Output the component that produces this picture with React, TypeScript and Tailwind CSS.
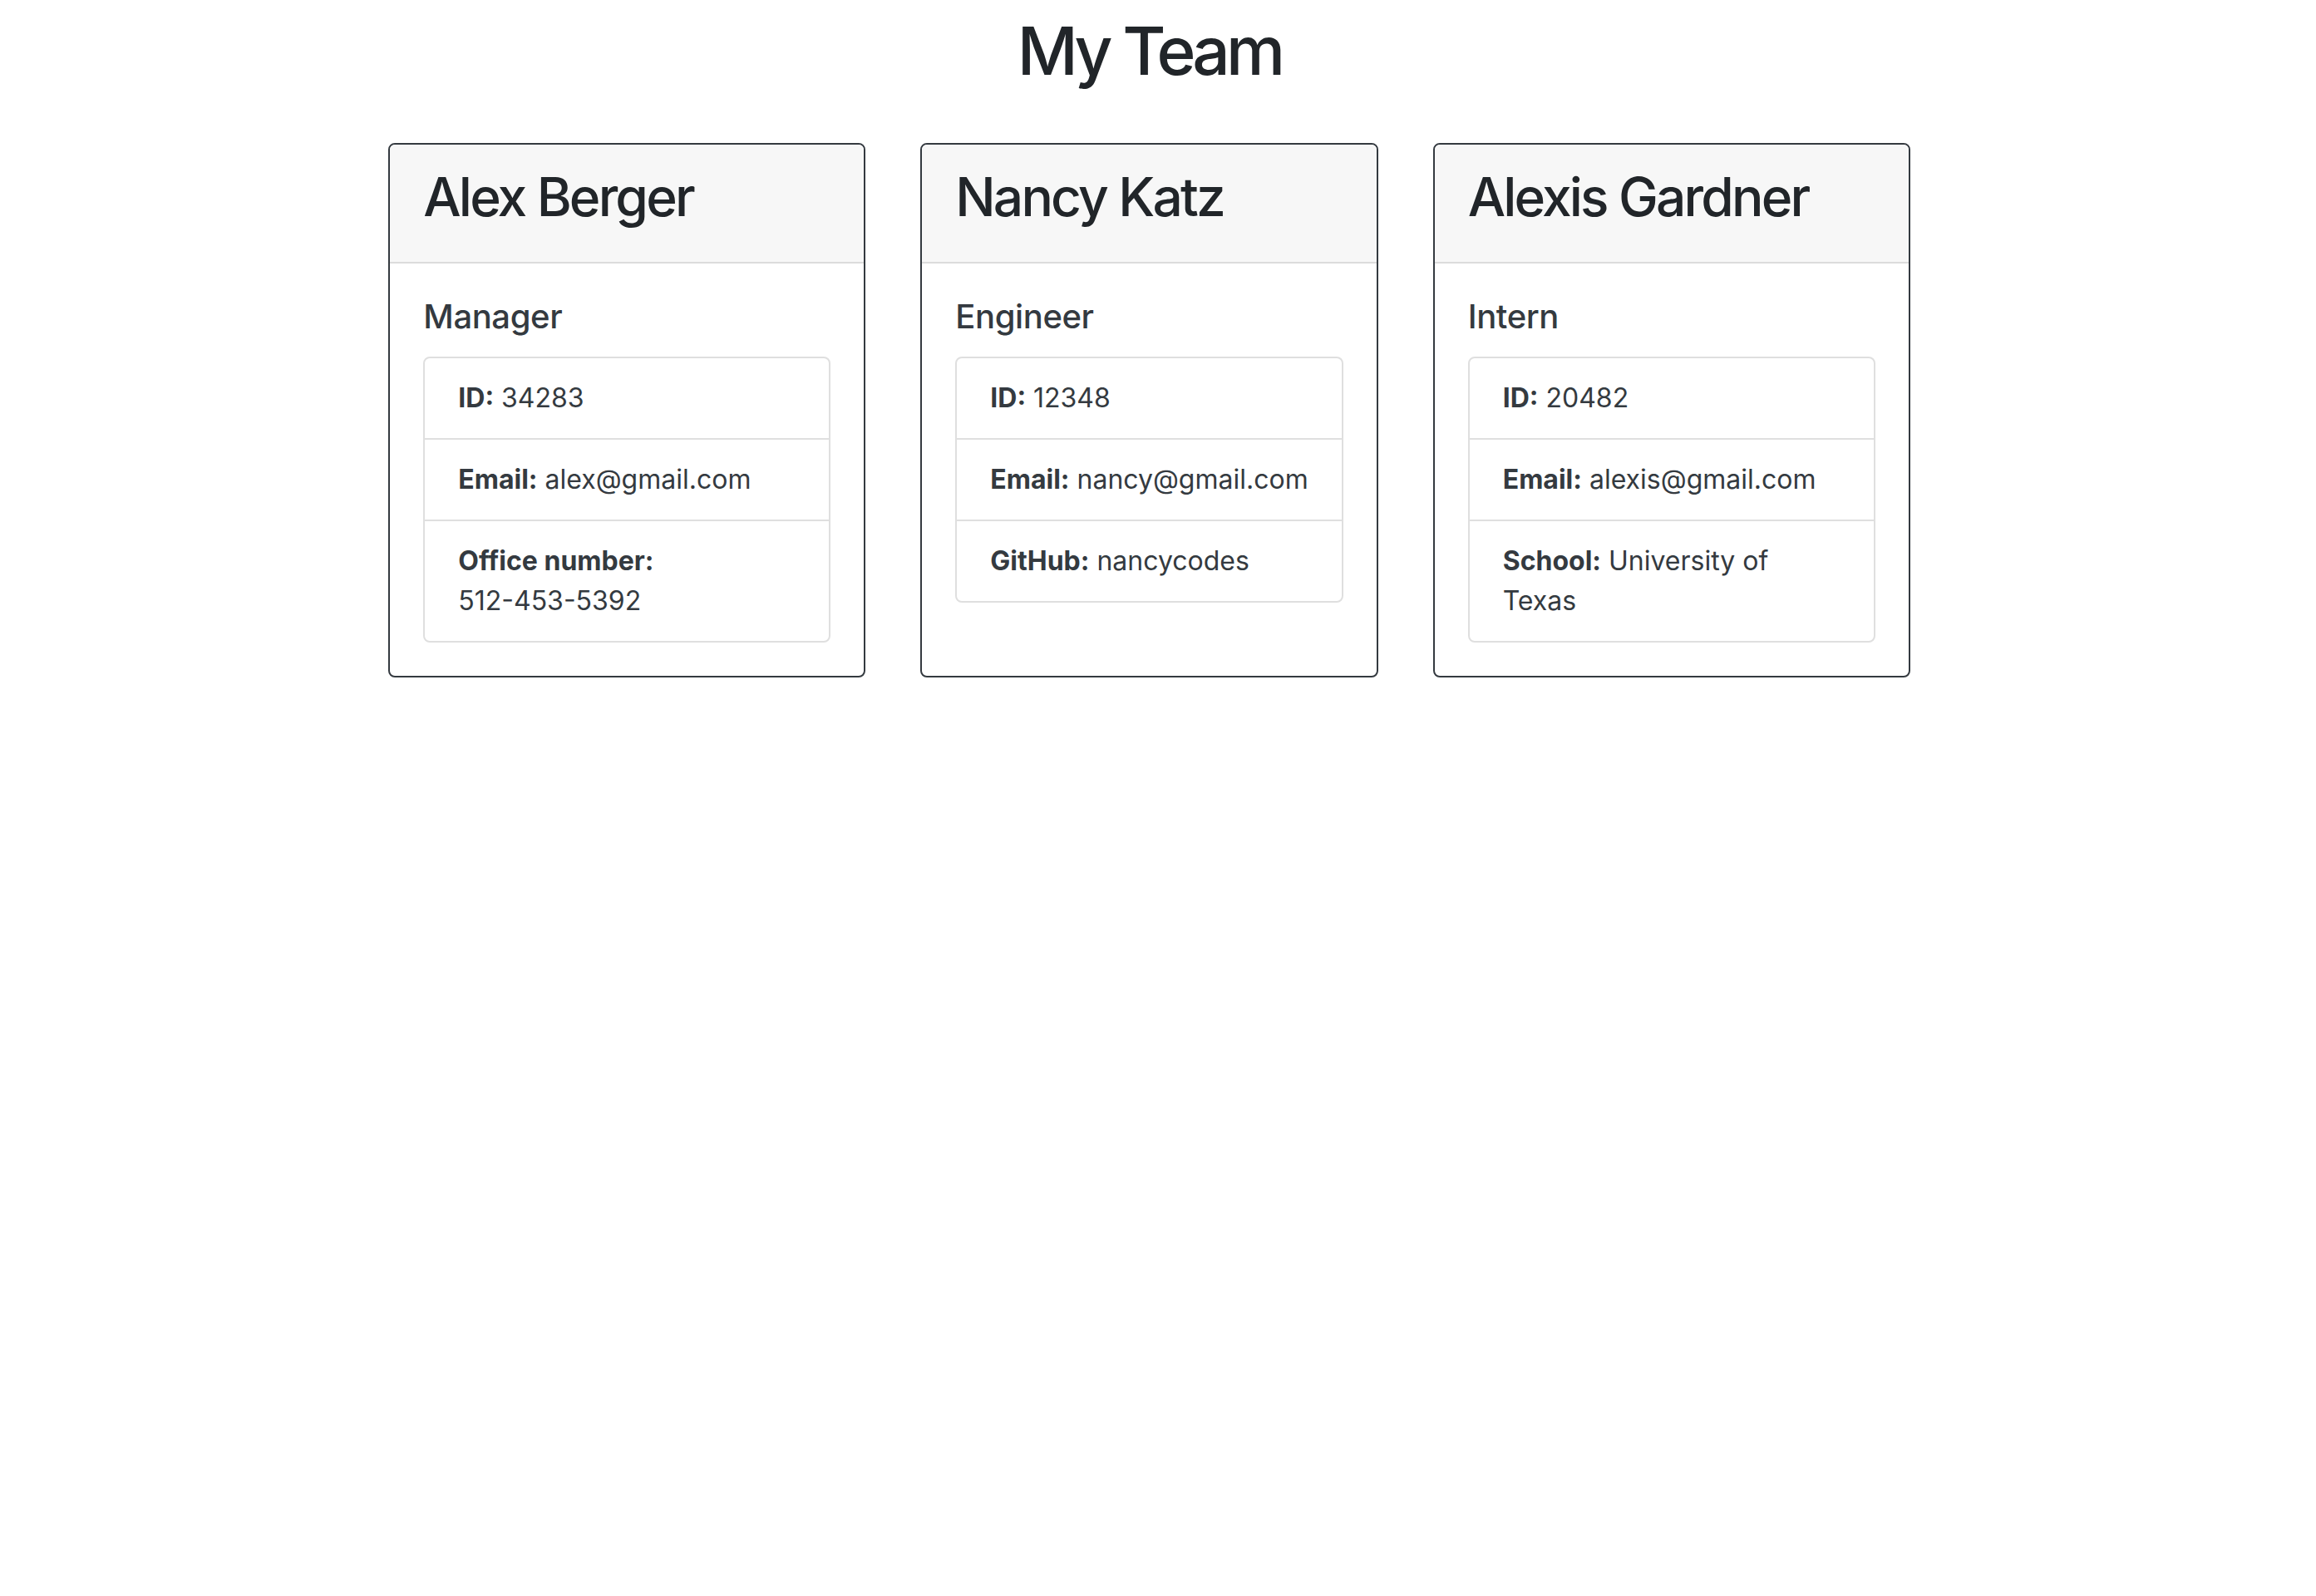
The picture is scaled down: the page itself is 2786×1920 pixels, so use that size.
const team = [
  {
    name: "Alex Berger",
    role: "Manager",
    rows: [
      ["ID:", "34283"],
      ["Email:", "alex@gmail.com"],
      ["Office number:", "512-453-5392"],
    ],
  },
  {
    name: "Nancy Katz",
    role: "Engineer",
    rows: [
      ["ID:", "12348"],
      ["Email:", "nancy@gmail.com"],
      ["GitHub:", "nancycodes"],
    ],
  },
  {
    name: "Alexis Gardner",
    role: "Intern",
    rows: [
      ["ID:", "20482"],
      ["Email:", "alexis@gmail.com"],
      ["School:", "University of Texas"],
    ],
  },
];

function Card({ name, role, rows }: { name: string; role: string; rows: string[][] }) {
  return (
    <div className="w-fit max-w-[574px] flex flex-col rounded-[8px] border-2 border-[#343a40] overflow-hidden">
      {/* header */}
      <div className="bg-[#f7f7f7] border-b-2 border-[#dcdcdc] px-[40px] py-[24px]">
        <h2 className="mb-[16px] text-[64px] leading-[77px] font-medium tracking-[-0.044em] text-[#212529] whitespace-nowrap">
          {name}
        </h2>
      </div>
      {/* body */}
      <div className="flex-1 p-[40px]">
        <h5 className="mb-[24px] text-[40px] leading-[48px] font-medium tracking-[-0.01em] text-[#343a40]">{role}</h5>
        <ul className="rounded-[8px] border-2 border-[#dfdfdf] divide-y-2 divide-[#dfdfdf]">
          {rows.map(([label, value]) => (
            <li key={label} className="px-[40px] py-[24px] text-[32px] leading-[48px] text-[#343a40]">
              <strong className="font-bold">{label}</strong>{" "}
              {value.includes("-") ? <span className="whitespace-nowrap">{value}</span> : value}
            </li>
          ))}
        </ul>
      </div>
    </div>
  );
}

export default function App() {
  return (
    <div className="min-h-screen bg-white font-['Inter',sans-serif] text-[#212529]">
      <div className="flex flex-col items-center pr-[21px]">
        <h1 className="mt-[13px] text-[80px] leading-[96px] font-medium tracking-[-0.06em]">My Team</h1>
        <div className="mt-[63px] flex justify-center gap-[66px]">
          {team.map((m) => (
            <Card key={m.name} {...m} />
          ))}
        </div>
      </div>
    </div>
  );
}
